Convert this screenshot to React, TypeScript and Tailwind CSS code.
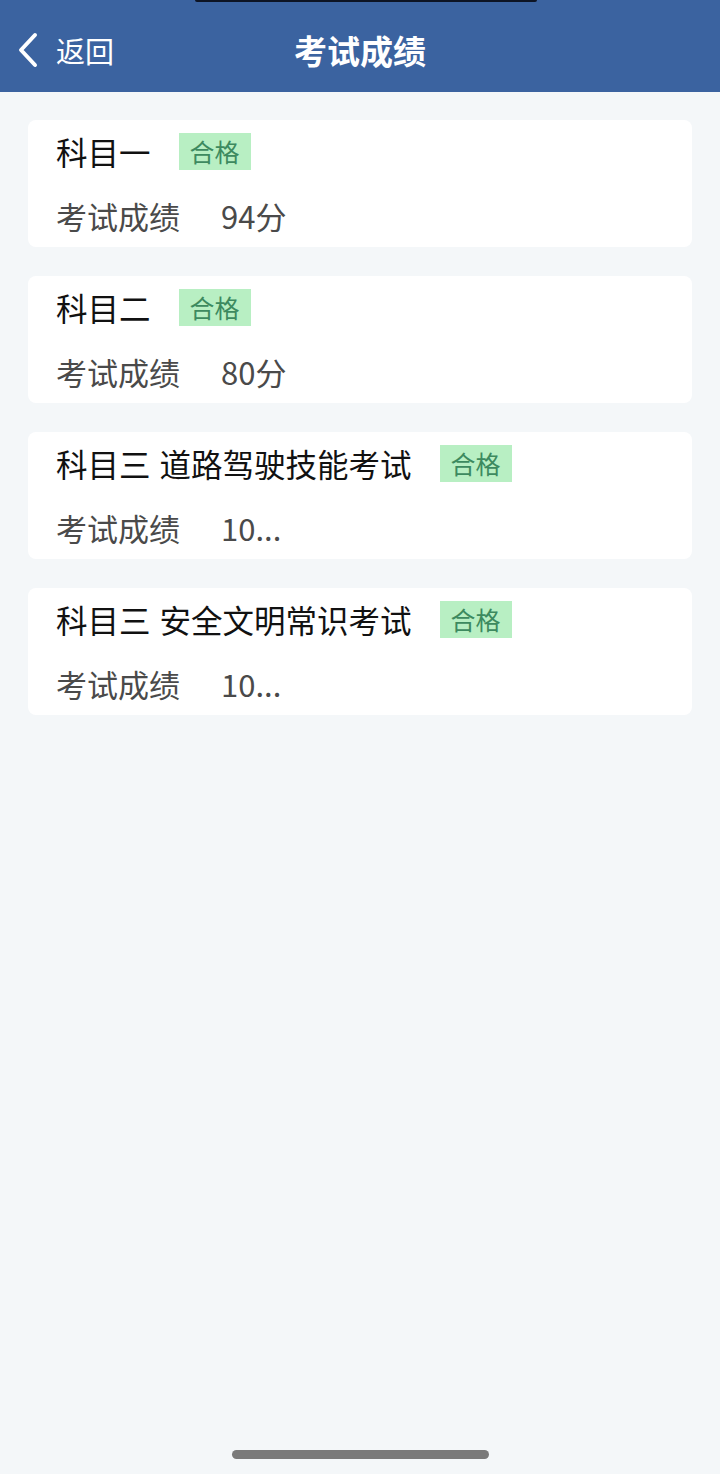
const results = [
  { name: "科目一", score: "94分" },
  { name: "科目二", score: "80分" },
  { name: "科目三 道路驾驶技能考试", score: "10..." },
  { name: "科目三 安全文明常识考试", score: "10..." },
];

const font = { fontFamily: "'Noto Sans CJK SC', 'Noto Sans', sans-serif" };

export default function App() {
  return (
    <div className="relative min-h-[1474px] w-[720px] bg-[#f4f7f9]" style={font}>
      {/* Header */}
      <div className="relative flex h-[92px] items-center bg-[#3b63a0] pt-[8px] text-white">
        <div className="absolute left-[195px] top-0 h-[2px] w-[342px] rounded-b-md bg-[#0d1424]" />
        <div className="flex items-center pl-[16px]">
          <svg width="24" height="36" viewBox="0 0 24 36" fill="none">
            <path d="M19 3 L5 18 L19 33" stroke="white" strokeWidth="4" strokeLinecap="round" strokeLinejoin="round" />
          </svg>
          <span className="ml-[16px] text-[29px] leading-none">返回</span>
        </div>
        <h1 className="absolute left-0 right-0 text-center text-[33px] font-bold leading-none">考试成绩</h1>
      </div>

      {/* List */}
      <div className="flex flex-col gap-[29px] px-[28px] pt-[28px]">
        {results.map((r, i) => (
          <div key={i} className="rounded-lg bg-white pl-[28px] pt-[13px] pb-[13px]">
            <div className="flex h-[37px] items-center">
              <span className="text-[31.5px] leading-none text-[#111] [word-spacing:2px]">{r.name}</span>
              <span className="ml-[28px] flex h-[37px] items-center bg-[#b8efc3] px-[11px] text-[25px] leading-none text-[#3d8a5f]">
                合格
              </span>
            </div>
            <div className="mt-[27px] flex h-[37px] items-center text-[31px] leading-none text-[#4a4a4a]">
              <span>考试成绩</span>
              <span className="ml-[41px]">{r.score}</span>
            </div>
          </div>
        ))}
      </div>

      {/* Home indicator */}
      <div className="absolute bottom-[15px] left-[232px] h-[9px] w-[257px] rounded-full bg-[#7a7a7a]" />
    </div>
  );
}
